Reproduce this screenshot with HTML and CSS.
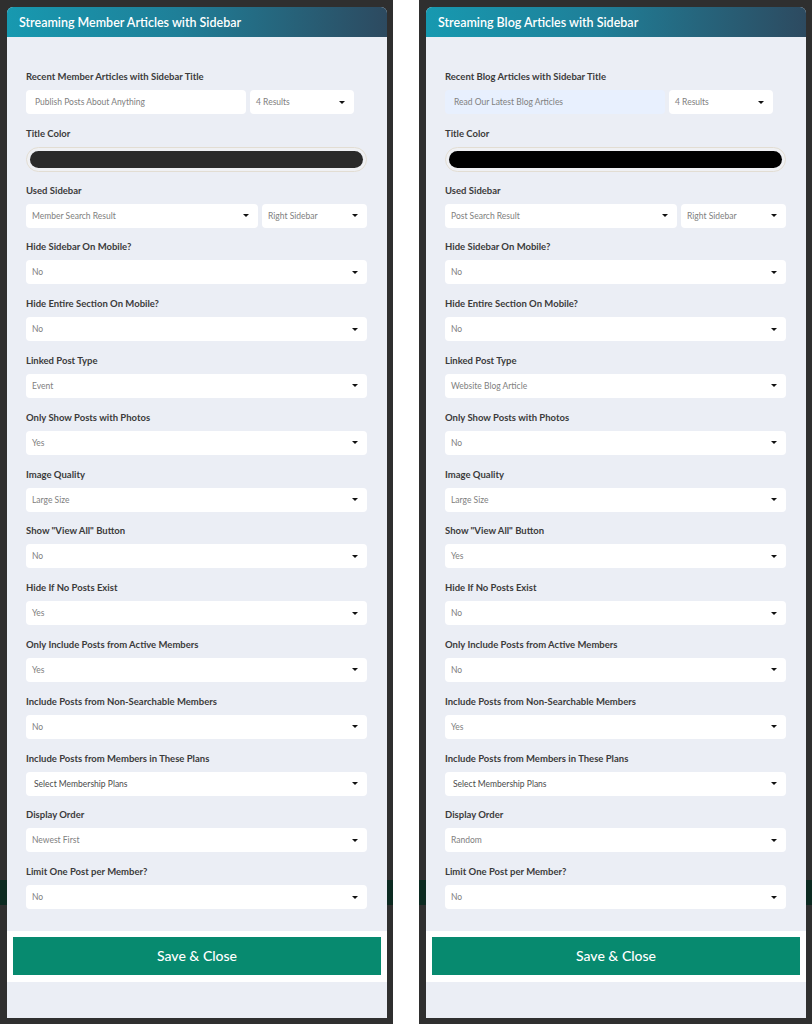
FILE: index.html
```html
<!DOCTYPE html>
<html lang="en">
<head>
    <meta charset="UTF-8">
    <title>Streaming Articles with Sidebar</title>
    <link rel="stylesheet" href="styles.css">
</head>
<body>
    <div class="screen">
        <div class="modal">
            <div class="modal-head">Streaming Member Articles with Sidebar</div>
            <div class="modal-body">
                <div class="field">
                    <label>Recent Member Articles with Sidebar Title</label>
                    <div class="row short">
                        <div class="control text">Publish Posts About Anything</div>
                        <div class="control results">4 Results <span class="caret"></span></div>
                    </div>
                </div>
                <div class="field color-field">
                    <label>Title Color</label>
                    <div class="swatch"><div class="swatch-fill"></div></div>
                </div>
                <div class="field">
                    <label>Used Sidebar</label>
                    <div class="row">
                        <div class="control grow">Member Search Result <span class="caret"></span></div>
                        <div class="control side">Right Sidebar <span class="caret"></span></div>
                    </div>
                </div>
                <div class="field"><label>Hide Sidebar On Mobile?</label><div class="control">No <span class="caret"></span></div></div>
                <div class="field"><label>Hide Entire Section On Mobile?</label><div class="control">No <span class="caret"></span></div></div>
                <div class="field"><label>Linked Post Type</label><div class="control">Event <span class="caret"></span></div></div>
                <div class="field"><label>Only Show Posts with Photos</label><div class="control">Yes <span class="caret"></span></div></div>
                <div class="field"><label>Image Quality</label><div class="control">Large Size <span class="caret"></span></div></div>
                <div class="field"><label>Show "View All" Button</label><div class="control">No <span class="caret"></span></div></div>
                <div class="field"><label>Hide If No Posts Exist</label><div class="control">Yes <span class="caret"></span></div></div>
                <div class="field"><label>Only Include Posts from Active Members</label><div class="control">Yes <span class="caret"></span></div></div>
                <div class="field"><label>Include Posts from Non-Searchable Members</label><div class="control">No <span class="caret"></span></div></div>
                <div class="field"><label>Include Posts from Members in These Plans</label><div class="control multi">Select Membership Plans <span class="caret"></span></div></div>
                <div class="field"><label>Display Order</label><div class="control">Newest First <span class="caret"></span></div></div>
                <div class="field"><label>Limit One Post per Member?</label><div class="control">No <span class="caret"></span></div></div>
            </div>
            <div class="modal-foot">
                <button class="save-btn">Save &amp; Close</button>
            </div>
            <div class="modal-rest"></div>
        </div>
    </div>

    <div class="screen">
        <div class="modal">
            <div class="modal-head">Streaming Blog Articles with Sidebar</div>
            <div class="modal-body">
                <div class="field">
                    <label>Recent Blog Articles with Sidebar Title</label>
                    <div class="row short">
                        <div class="control text autofill">Read Our Latest Blog Articles</div>
                        <div class="control results">4 Results <span class="caret"></span></div>
                    </div>
                </div>
                <div class="field color-field">
                    <label>Title Color</label>
                    <div class="swatch"><div class="swatch-fill black"></div></div>
                </div>
                <div class="field">
                    <label>Used Sidebar</label>
                    <div class="row">
                        <div class="control grow">Post Search Result <span class="caret"></span></div>
                        <div class="control side">Right Sidebar <span class="caret"></span></div>
                    </div>
                </div>
                <div class="field"><label>Hide Sidebar On Mobile?</label><div class="control">No <span class="caret"></span></div></div>
                <div class="field"><label>Hide Entire Section On Mobile?</label><div class="control">No <span class="caret"></span></div></div>
                <div class="field"><label>Linked Post Type</label><div class="control">Website Blog Article <span class="caret"></span></div></div>
                <div class="field"><label>Only Show Posts with Photos</label><div class="control">No <span class="caret"></span></div></div>
                <div class="field"><label>Image Quality</label><div class="control">Large Size <span class="caret"></span></div></div>
                <div class="field"><label>Show "View All" Button</label><div class="control">Yes <span class="caret"></span></div></div>
                <div class="field"><label>Hide If No Posts Exist</label><div class="control">No <span class="caret"></span></div></div>
                <div class="field"><label>Only Include Posts from Active Members</label><div class="control">No <span class="caret"></span></div></div>
                <div class="field"><label>Include Posts from Non-Searchable Members</label><div class="control">Yes <span class="caret"></span></div></div>
                <div class="field"><label>Include Posts from Members in These Plans</label><div class="control multi">Select Membership Plans <span class="caret"></span></div></div>
                <div class="field"><label>Display Order</label><div class="control">Random <span class="caret"></span></div></div>
                <div class="field"><label>Limit One Post per Member?</label><div class="control">No <span class="caret"></span></div></div>
            </div>
            <div class="modal-foot">
                <button class="save-btn">Save &amp; Close</button>
            </div>
            <div class="modal-rest"></div>
        </div>
    </div>
</body>
</html>
```
FILE: styles.css
```css
body {
    margin: 0;
    background: #fff;
    display: flex;
    gap: 26px;
    font-family: Lato, 'Noto Sans', 'Liberation Sans', sans-serif;
}
.screen {
    width: 393px;
    height: 1024px;
    box-sizing: border-box;
    padding: 7px 6px 6px 7px;
    background: linear-gradient(to bottom, #2f2f2f 0, #2f2f2f 880px, #0c2a21 880px, #0c2a21 905px, #2f2f2f 905px);
}
.modal {
    height: 100%;
    display: flex;
    flex-direction: column;
    background: #ebeef5;
    border-radius: 6px 6px 0 0;
    overflow: hidden;
}
.modal-head {
    height: 30px;
    flex-shrink: 0;
    display: flex;
    align-items: center;
    padding-left: 12px;
    background: linear-gradient(90deg, #1799b0 0%, #1f7f98 45%, #2d4a60 100%);
    color: #fff;
    font-size: 12.5px;
    font-weight: 600;
}
.modal-body {
    padding: 34px 20px 8px 19px;
}
.field {
    margin-bottom: 13.8px;
}
.field label {
    display: block;
    font-size: 9.5px;
    line-height: 12px;
    font-weight: 700;
    color: #3b3b3b;
    margin-bottom: 7px;
}
.color-field {
    margin-bottom: 12.8px;
}
.row {
    display: flex;
    gap: 4px;
}
.row.short {
    width: 328px;
}
.control {
    height: 24px;
    box-sizing: border-box;
    display: flex;
    align-items: center;
    justify-content: space-between;
    padding: 0 9px 0 6px;
    background: #fff;
    border-radius: 4px;
    font-size: 8.5px;
    color: #808080;
}
.control.text {
    flex: 1;
    padding-left: 9px;
}
.control.autofill {
    background: #e8f0fe;
}
.control.results {
    width: 104px;
}
.control.grow {
    flex: 1;
}
.control.side {
    width: 105px;
}
.control.multi {
    padding-left: 8px;
    color: #4a4a4a;
}
.caret {
    width: 0;
    height: 0;
    border-left: 3px solid transparent;
    border-right: 3px solid transparent;
    border-top: 3px solid #111;
}
.swatch {
    height: 25px;
    box-sizing: border-box;
    padding: 3px;
    border: 1px solid #e2ddd3;
    border-radius: 13px;
    background: #eff0f3;
}
.swatch-fill {
    height: 17px;
    border-radius: 9px;
    background: #2a2a2a;
}
.swatch-fill.black {
    background: #000;
}
.modal-foot {
    background: #fff;
    padding: 6px 6px 7px;
}
.save-btn {
    display: block;
    width: 100%;
    height: 38px;
    border: 0;
    background: #078a6f;
    color: #fff;
    font-family: inherit;
    font-size: 14px;
    font-weight: 500;
}
.modal-rest {
    flex: 1;
}
```
